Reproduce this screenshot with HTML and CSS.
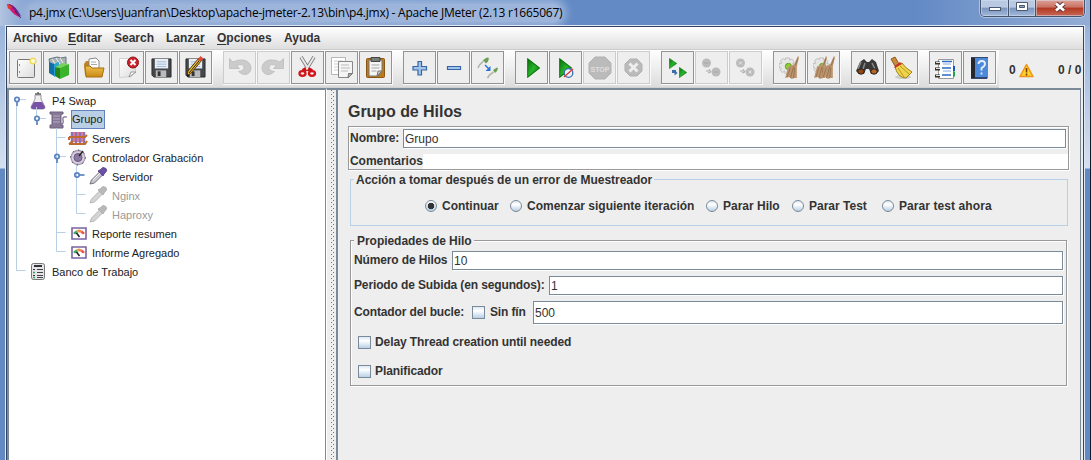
FILE: index.html
```html
<!DOCTYPE html>
<html lang="es">
<head>
<meta charset="utf-8">
<title>p4.jmx - Apache JMeter</title>
<link rel="stylesheet" href="styles.css">
</head>
<body>
<svg width="0" height="0" class="defs">
  <defs>
    <linearGradient id="green" x1="0" y1="0" x2="1" y2="1"><stop offset="0" stop-color="#0b6b0b"/><stop offset=".5" stop-color="#27b32b"/><stop offset="1" stop-color="#087008"/></linearGradient>
    <linearGradient id="gold" x1="0" y1="0" x2="0" y2="1"><stop offset="0" stop-color="#efc04e"/><stop offset="1" stop-color="#c98a15"/></linearGradient>
    <linearGradient id="paper" x1="0" y1="0" x2="1" y2="1"><stop offset="0" stop-color="#fff"/><stop offset="1" stop-color="#dcdcdc"/></linearGradient>
    <symbol id="floppy" viewBox="0 0 22 22"><path d="M1 2h20v19H3l-2-2z" fill="#45474a" stroke="#2b2c2e"/><path d="M4 2h14v10H4z" fill="#e9eef5"/><path d="M6 5h10M6 7.500h10M6 10h10" stroke="#9db6da"/><path d="M5 14h11v7H5z" fill="#b9bbbd"/><path d="M7 15h3v5H7z" fill="#333"/></symbol>
    <symbol id="play" viewBox="0 0 13 18" preserveAspectRatio="none"><path d="M.7.700v16.600L12.500 9z" fill="url(#green)" stroke="#0b780b"/></symbol>
    <symbol id="broom" viewBox="0 0 14 22" preserveAspectRatio="none"><path d="M13 0 9.500 8 4 10 1 21l4-1 2 2 3-1 2 0V10L14 1z" fill="#bd9670"/><path d="M6 11 3 20m6-10L6 21m4-10-1 10M13 2l-2.500 7" stroke="#8b6745" stroke-width=".7" fill="none"/></symbol>
    <symbol id="gear" viewBox="0 0 18 18"><path d="m7 1 4 0 .5 2.500 2-1.500 2.500 3-1.500 2 3 .5v4l-3 .5 1 2.500-3 2.500-2-1.500-.5 2.500H6.500L6 15l-2.500 1.500L1 13.500 2.500 12 0 11V7l3-.5L1.500 4l3-2.500 2 1.500z" fill="#e6e6e6" stroke="#b2b2b2" stroke-width=".8"/><circle cx="10" cy="10" r="3.300" fill="#87d42b" stroke="#5c9d25"/></symbol>
    <symbol id="pipette" viewBox="0 0 18 18"><path d="M1 17l1.500-4 9-9 3 3-9 9z" fill="#c9c6cf" stroke="#77727d"/><path d="m4 13 7-7" stroke="#f4f2f6"/><path d="m9 4 2-1 3-2.500 3 1L17.500 4 15 7l-1 2z" fill="#6a51a4" stroke="#59438c"/></symbol>
    <symbol id="pipette-off" viewBox="0 0 18 18"><path d="M1 17l1.500-4 9-9 3 3-9 9z" fill="#d4d4d4" stroke="#b7b7b7"/><path d="m9 4 2-1 3-2.500 3 1L17.500 4 15 7l-1 2z" fill="#b9b9b9" stroke="#b0b0b0"/></symbol>
    <symbol id="gauge" viewBox="0 0 16 13"><path d="M1 1h14v11H1z" fill="#fff" stroke="#7863a1" stroke-width="1.600"/><path d="m2 6 3-2.500 2 2-3 2z" fill="#3cab5c"/><path d="m5 3.500 3-1 3 1-1.500 2h-2z" fill="#ef9248"/><path d="m11 3.500 3 2.500-2 1.500L9.500 5.500z" fill="#e95353"/><path d="m5.500 6 3 4" stroke="#222" stroke-width="1.600"/></symbol>
    <symbol id="undo" viewBox="0 0 24 19"><path d="M1.500 1.500v10h10L8.500 8.500Q15 6 16 10q.5 4-5.500 4.500Q14 18 18 17.500q5-1.500 5-7Q22 4 15 3 9 2.500 5 5z" fill="#cbcbcb" stroke="#c2c2c2"/></symbol>
  </defs>
</svg>
<div class="window">
  <header class="titlebar">
    <svg class="feather" viewBox="0 0 17 17"><path d="M1 1q6 0 10 6l4 8-4-2Q4 9 1 1z" fill="#d5186f"/><path d="M3 2q6 2 11 11" stroke="#64238f" stroke-width="2" fill="none"/><path d="M1 1 7 4 2 6z" fill="#e63a28"/><path d="m9 8 6 7" stroke="#30145e"/></svg>
    <span class="title">p4.jmx (C:\Users\Juanfran\Desktop\apache-jmeter-2.13\bin\p4.jmx) - Apache JMeter (2.13 r1665067)</span>
    <div class="controls">
      <div class="ctl min"><svg width="14" height="14"><rect x="1.500" y="7.500" width="11" height="3" fill="#fff" stroke="#4c5870"/></svg></div>
      <div class="ctl max"><svg width="14" height="14"><path d="M1.500 2.500h11v8h-11z" fill="#fff" stroke="#4c5870"/><path d="M4.500 5.500h5v2h-5z" fill="#8ea5c9" stroke="#4c5870"/></svg></div>
      <div class="ctl close"><svg width="14" height="14"><path d="m3 3.500 8 7m0-7-8 7" stroke="#5b3440" stroke-width="4.500"/><path d="m3 3.500 8 7m0-7-8 7" stroke="#fff" stroke-width="2.800"/></svg></div>
    </div>
  </header>
  <main class="client">
    <nav class="menu">
      <span class="m1">Archivo</span><span class="m2"><u>E</u>ditar</span><span class="m3">Search</span><span class="m4">Lanza<u>r</u></span><span class="m5"><u>O</u>pciones</span><span class="m6">Ayuda</span>
    </nav>
    <div class="toolbar">
      <div class="tools">
        <div class="group">
          <button class="tool"><svg viewBox="0 0 33 33"><rect x="8.500" y="8.500" width="17" height="18" rx="1" fill="url(#paper)" stroke="#777"/><path d="M10.500 13v2m0 5v2" stroke="#888"/><circle cx="24" cy="10" r="2.800" fill="#fffbd8" stroke="#f0dc58" stroke-width="1.400"/></svg></button>
          <button class="tool"><svg viewBox="0 0 33 33"><path d="M6 8 14 6l4 1 5-1v12L8 21z" fill="#a9b3b5" stroke="#65777d"/><path d="m9 8 4 6m0-7 4 6m0-6 3 5" stroke="#eef5f6"/><path d="m6 11 5 2v12l-5-3z" fill="#0f6fa7"/><path d="m11 13 5-2v12l-5 3z" fill="#2ba0d2"/><path d="m12 16 5 1v11l-5-3z" fill="#25841b"/><path d="m17 17 9-4v11l-9 4z" fill="#3bb32b"/><path d="m12 16 8-4 6 1-9 4z" fill="#75d45c"/></svg></button>
          <button class="tool"><svg viewBox="0 0 33 33"><path d="M7 13l2-3h4v14H8z" fill="#be8427"/><path d="m12 8 7-1 3 3v10H12z" fill="#fff" stroke="#888"/><path d="M14 11h5m-5 2.500h6" stroke="#aaa"/><path d="M8 15h5l2 2h12l-2 9H9z" fill="url(#gold)" stroke="#a96e0c"/></svg></button>
          <button class="tool"><svg viewBox="0 0 33 33"><path d="M8.500 7.500h16v13l-4 5-12 1z" fill="url(#paper)" stroke="#d1d1d1"/><path d="m18 26 2-5h5z" fill="#fff" stroke="#777" stroke-width=".7"/><circle cx="22" cy="11.500" r="5.500" fill="#c9222a" stroke="#8e1518"/><path d="m19.500 9 5 5m0-5-5 5" stroke="#fff" stroke-width="2"/></svg></button>
          <button class="tool"><svg viewBox="0 0 33 33"><use href="#floppy" x="6" y="6" width="21" height="21"/></svg></button>
          <button class="tool"><svg viewBox="0 0 33 33"><use href="#floppy" x="6" y="6" width="21" height="21"/><path d="m8 25 1-5L20 7l3 2-11 13z" fill="#f0bd31" stroke="#553900"/><path d="m10 22 10-12" stroke="#222"/><path d="m18.500 9 3-4 3 2.500-3 3z" fill="#dd4a38"/><path d="m8 26 .5-3 2 1.500z" fill="#111"/></svg></button>
        </div>
        <div class="group">
          <button class="tool off"><svg viewBox="0 0 33 33"><use href="#undo" x="5" y="6" width="24" height="19"/></svg></button>
          <button class="tool off"><svg viewBox="0 0 33 33"><use href="#undo" x="5" y="6" width="24" height="19" transform="matrix(-1 0 0 1 33 0)"/></svg></button>
          <button class="tool"><svg viewBox="0 0 33 33"><path d="m10 6 8 13M23 6l-8 13" stroke="#777" stroke-width="3.500"/><path d="m10 6 8 13M23 6l-8 13" stroke="#e9e9e9" stroke-width="2"/><path d="m15 18-3 2m5-2 4 2" stroke="#c91015" stroke-width="4"/><ellipse cx="11.500" cy="22.500" rx="3" ry="2.300" fill="#eee" stroke="#d41418" stroke-width="2.300"/><ellipse cx="21" cy="22.500" rx="3" ry="2.300" fill="#eee" stroke="#d41418" stroke-width="2.300"/></svg></button>
          <button class="tool"><svg viewBox="0 0 33 33"><path d="M6.500 6.500h14v17h-14z" fill="#fff" stroke="#b6b6b6"/><path d="M9 10h9M9 13h5m-5 3h4m-4 3h4" stroke="#ccc"/><path d="M13.500 10.500h14v12l-4 4h-10z" fill="#f5f5f5" stroke="#888"/><path d="M16 14h8m-8 3h9m-9 3h7" stroke="#bbb"/><path d="m23 27 .5-4.500h4z" fill="#aaa" stroke="#777"/></svg></button>
          <button class="tool"><svg viewBox="0 0 33 33"><rect x="7.500" y="7.500" width="18" height="19" rx="1" fill="#bb791c" stroke="#8b5710"/><path d="M10 9h13v11l-4 5h-9z" fill="#f5f5f5" stroke="#777"/><path d="M12 6.500h9v4h-9z" fill="#777f77" stroke="#444"/><path d="M12.500 14h8m-8 3h8m-8 3h5" stroke="#a5a5a5"/><path d="m18 25 1-5h4z" fill="#ccc" stroke="#777"/></svg></button>
        </div>
        <div class="group">
          <button class="tool"><svg viewBox="0 0 33 33"><path d="M15 10.500h3.500v5H23.500V19h-5v5H15v-5h-5v-3.500h5z" fill="#a3c4ea" stroke="#3665a5" stroke-width="1.200"/></svg></button>
          <button class="tool"><svg viewBox="0 0 33 33"><path d="M10.500 15.500h13v3h-13z" fill="#a3c4ea" stroke="#3665a5" stroke-width="1.200"/></svg></button>
          <button class="tool"><svg viewBox="0 0 33 33"><path d="m7 17 1.500-3 4-4M16.500 27l2-3 4-3" stroke="#b0b6ac" stroke-width="1.600" fill="none"/><path d="m12 9 4-2.500 2 .5-1 3.500-2 2zm10 10 4-2.500 1 .5-1 3-2 2z" fill="#689f53"/><path d="m14 14 4 4" stroke="#2874d9" stroke-width="1.500"/><path d="M19.500 15v5h-5z" fill="#2874d9"/></svg></button>
        </div>
        <div class="group">
          <button class="tool"><svg viewBox="0 0 33 33"><use href="#play" x="12" y="7" width="13" height="20"/></svg></button>
          <button class="tool"><svg viewBox="0 0 33 33"><use href="#play" x="10" y="7" width="13" height="20"/><circle cx="19.500" cy="22" r="4.300" fill="#edf3fa" stroke="#376eaf" stroke-width="1.300"/><path d="m15 26 9-8" stroke="#dc3b36" stroke-width="1.500"/></svg></button>
          <button class="tool off"><svg viewBox="0 0 33 33"><path d="m12 6 10 0 6 6v10l-6 6h-10l-6-6v-10z" fill="#bbb" stroke="#b1b1b1"/><text x="17" y="20.500" class="stop" textLength="19" lengthAdjust="spacingAndGlyphs">STOP</text></svg></button>
          <button class="tool off"><svg viewBox="0 0 33 33"><path d="m13 8 7 0 5 5v7l-5 5h-7l-5-5v-7z" fill="#bbb" stroke="#b1b1b1"/><path d="m12.500 12.500 8 8m0-8-8 8" stroke="#eee" stroke-width="3"/></svg></button>
        </div>
        <div class="group">
          <button class="tool"><svg viewBox="0 0 33 33"><use href="#play" x="8" y="7" width="8" height="11"/><use href="#play" x="18" y="16" width="8" height="11"/><path d="M11 20.500h4" stroke="#3e6cab" stroke-width="3"/><path d="m13.500 19 3 3-3 2.500z" fill="#3e6cab"/></svg></button>
          <button class="tool off"><svg viewBox="0 0 33 33"><g fill="#bbb"><circle cx="11.500" cy="12" r="4.500"/><circle cx="21" cy="21" r="4.500"/></g><path d="M9 12h5m4.500 9h5" stroke="#aaa"/><path d="M11 20h4m-1-2 2 3-3 1" stroke="#aaa" fill="none"/></svg></button>
          <button class="tool off"><svg viewBox="0 0 33 33"><g fill="#bbb"><circle cx="11.500" cy="12" r="4.500"/><circle cx="21" cy="21" r="4.500"/></g><path d="m10 10.500 3 3m0-3-3 3m9.500 6 3 3m0-3-3 3" stroke="#e5e5e5"/><path d="M11 20h4m-1-2 2 3-3 1" stroke="#aaa" fill="none"/></svg></button>
        </div>
        <div class="group">
          <button class="tool"><svg viewBox="0 0 33 33"><use href="#gear" x="6" y="6" width="17" height="17"/><use href="#broom" x="11" y="5" width="15" height="23"/></svg></button>
          <button class="tool"><svg viewBox="0 0 33 33"><use href="#gear" x="6" y="6" width="17" height="17"/><use href="#broom" x="6" y="5" width="14" height="23"/><use href="#broom" x="13" y="5" width="15" height="23"/></svg></button>
        </div>
        <div class="group">
          <button class="tool"><svg viewBox="0 0 33 33"><path d="m9 11 4-3 3 3h2l3-3 4 3 3 9-3 3h-5l-2-5h-3l-2 5H8l-3-3z" fill="#393939"/><path d="m10 11-3 7m7-6-2 6m9-6 3 6" stroke="#8a8a8a" stroke-width="1.500"/><ellipse cx="10" cy="20.500" rx="3.200" ry="2.700" fill="#944710" stroke="#222"/><ellipse cx="23" cy="20.500" rx="3.200" ry="2.700" fill="#b76522" stroke="#222"/></svg></button>
          <button class="tool"><svg viewBox="0 0 33 33"><ellipse cx="18" cy="26" rx="8" ry="2" fill="#ccc"/><path d="m6 8 4-2 4 7-4 2z" fill="#c98b3c" stroke="#8c5b1d"/><path d="m10 16 7-4q3 5 10 9l-6 6q-8 0-11-11z" fill="#efd34c" stroke="#a28412"/><path d="m13 17 6 9m-4-11 9 8" stroke="#b49b25"/><path d="m9 16 6-5 2 2-7 4z" fill="#cf302b"/></svg></button>
        </div>
        <div class="group">
          <button class="tool"><svg viewBox="0 0 33 33"><path d="M9.500 8.500h15v19h-15z" fill="#fff" stroke="#999"/><path d="M25 15v5" stroke="#1557bd" stroke-width="2"/><path d="M25 20.500v5" stroke="#25a244" stroke-width="2"/><path d="M13 10.500h10M13 17h9m-9 7h9" stroke="#2b6bc5" stroke-width="1.400"/><path d="M14 13h8m-8 7h8" stroke="#7fa9dd"/><path d="M6 12h5m-5 6h5m-5 7h5" stroke="#333" stroke-width="3"/><path d="M7 11.500h4m-4 6h4m-4 7h4" stroke="#ddd"/></svg></button>
          <button class="tool"><svg viewBox="0 0 33 33"><path d="M8 6h17v20l-1 2H8z" fill="#32486e"/><path d="M12 7h13v19H12z" fill="#4d88d9"/><path d="M8 7h4v20H8z" fill="#24272d"/><path d="M15.500 13q0-3 3.500-3 3 0 3 3 0 2-3.500 4v2.500M18.500 21.500v2" stroke="#e4effd" stroke-width="1.800" fill="none"/></svg></button>
        </div>
      </div>
      <div class="counters"><span class="errs">0</span><svg width="15" height="15" viewBox="0 0 15 15"><path d="M7.500 1.500 14 13.500H1z" fill="#ffd42a" stroke="#ef9416" stroke-width="1.500" stroke-linejoin="round"/><path d="M7.500 5v4.500m0 1v2" stroke="#7d3a0b" stroke-width="1.600"/></svg><span class="threads">0 / 0</span></div>
    </div>
    <div class="split">
      <section class="tree">
        <svg class="links" width="120" height="200" fill="none">
          <g stroke="#b8cfe5"><path d="M7.500 16v164.500h9M11 9.500h6M27.500 17v10M31 28.500h6M47.500 38v123.500h9M47.500 47.500h9M51 66.500h6M47.500 142.500h9M67.500 75v48.500h9M67.500 104.500h9"/></g>
          <g stroke="#5b83c0" stroke-width="1.700"><circle cx="8" cy="9.500" r="2.200"/><path d="M8 12v4"/><circle cx="28" cy="28.500" r="2.200"/><path d="M28 31v4"/><circle cx="48" cy="66.500" r="2.200"/><path d="M48 69v4"/><circle cx="68" cy="85" r="2.200"/><path d="M70.500 85h5"/></g>
        </svg>
        <div class="row l0"><svg viewBox="0 0 20 19"><path d="M7 4h6v4l4 8q0 2-2 2H5q-2 0-2-2l4-8z" fill="#eee" stroke="#9a96a1"/><path d="m6 11h8l3 5q0 2-2 2H5q-2 0-2-2z" fill="#7952a8"/><path d="M7 3h6M10 1v2" stroke="#666" stroke-width="1.500"/></svg><span>P4 Swap</span></div>
        <div class="row l1"><svg viewBox="0 0 20 19"><path d="M2 2h13v2h-2v11h2v3H2v-3h2V4H2z" fill="#877996" stroke="#716080"/><path d="M5 6h7M5 9h7m-7 3h7" stroke="#b5a8c2"/><path d="M13 14q3 0 2-4-1-4 4-3" fill="none" stroke="#756586" stroke-width="1.200"/></svg><span class="selected">Grupo</span></div>
        <div class="row l2"><svg viewBox="0 0 20 19"><path d="M4 3v11m4-11v11m4-11v11m4-11v11" stroke="#8d73b6" stroke-width="2.500"/><path d="M6 3v10m4-10v10m4-10v10" stroke="#d7476a" stroke-width="1.300"/><path d="M1 8h16l2-2M1 15h16l2-3M1 8v3m0 4 4-3" stroke="#bd6c2d" stroke-width="2" fill="none"/></svg><span>Servers</span></div>
        <div class="row l2"><svg viewBox="0 0 20 19"><circle cx="10" cy="9.500" r="7" fill="#d5cedc" stroke="#a99db8" stroke-width="1.300"/><circle cx="10" cy="9.500" r="7.500" fill="none" stroke="#222" stroke-dasharray="1 4.900"/><circle cx="10" cy="9.500" r="4" fill="#8b79a2" stroke="#6a5683"/><path d="m11 8 4-5" stroke="#222" stroke-width="1.500"/></svg><span>Controlador Grabación</span></div>
        <div class="row l3"><svg viewBox="0 0 20 19"><use href="#pipette" x="1" y="0" width="18" height="18"/></svg><span>Servidor</span></div>
        <div class="row l3 dim"><svg viewBox="0 0 20 19"><use href="#pipette-off" x="1" y="0" width="18" height="18"/></svg><span>Nginx</span></div>
        <div class="row l3 dim"><svg viewBox="0 0 20 19"><use href="#pipette-off" x="1" y="0" width="18" height="18"/></svg><span>Haproxy</span></div>
        <div class="row l2"><svg viewBox="0 0 20 19"><use href="#gauge" x="3" y="3" width="16" height="13"/></svg><span>Reporte resumen</span></div>
        <div class="row l2"><svg viewBox="0 0 20 19"><use href="#gauge" x="3" y="3" width="16" height="13"/></svg><span>Informe Agregado</span></div>
        <div class="row l0"><svg viewBox="0 0 20 19"><rect x="3.500" y="1.500" width="13" height="16" rx="2" fill="#e6e4ea" stroke="#777"/><path d="M6 4h8" stroke="#333" stroke-width="2"/><path d="M9 7.500h6m-6 3h6m-6 3h6m-6 2h6" stroke="#444"/><path d="M5 7.500h2m-2 6h2" stroke="#333"/><path d="M5 10.500h2m-2 5h2" stroke="#30a652" stroke-width="1.500"/></svg><span>Banco de Trabajo</span></div>
      </section>
      <div class="divider"></div>
      <section class="panel">
        <h1>Grupo de Hilos</h1>
        <div class="naming">
          <div class="name-row"><label>Nombre:</label><div class="field">Grupo</div></div>
          <div class="comment-row"><label>Comentarios</label><div class="comment"></div></div>
        </div>
        <div class="box action">
          <div class="legend">Acción a tomar después de un error de Muestreador</div>
          <div class="radios">
            <span class="r1"><i class="radio on"></i>Continuar</span><span class="r2"><i class="radio"></i>Comenzar siguiente iteración</span><span class="r3"><i class="radio"></i>Parar Hilo</span><span class="r4"><i class="radio"></i>Parar Test</span><span class="r5"><i class="radio"></i>Parar test ahora</span>
          </div>
        </div>
        <div class="box props">
          <div class="legend">Propiedades de Hilo</div>
          <div class="prop p1"><label>Número de Hilos</label><div class="field">10</div></div>
          <div class="prop p2"><label>Periodo de Subida (en segundos):</label><div class="field">1</div></div>
          <div class="prop p3"><label>Contador del bucle:</label><i class="check"></i><span>Sin fín</span><div class="field">500</div></div>
          <div class="option"><i class="check"></i>Delay Thread creation until needed</div>
          <div class="option last"><i class="check"></i>Planificador</div>
        </div>
      </section>
    </div>
  </main>
</div>
</body>
</html>
```
FILE: styles.css
```css
* { box-sizing: border-box; }
body { margin: 0; overflow: hidden; font: bold 12px/14px "Liberation Sans", Arial, sans-serif; color: #333; }
.defs { position: absolute; }
svg { display: block; flex: none; }
span, label { white-space: nowrap; }

.window {
  display: flex; flex-direction: column; width: 1091px; height: 460px;
  padding-right: 1px;
  background: linear-gradient(#99b4dc 26px, #d4e0f0 168px, #6389c2 169px) left / 1090px 100% no-repeat, #111a2b;
}
.titlebar {
  display: flex; align-items: flex-start; height: 26px; flex: none; overflow: hidden;
  background: linear-gradient(90deg, #b2c4e0, #7f9ed0 30px, #638ac5 50%, #638ac5 84%, #95add5);
}
.feather { width: 17px; height: 17px; margin: 3px 0 0 6px; }
.title {
  margin: 4px 0 0 5px; width: 533px; height: 18px; padding-left: 1px;
  font: 12px/17px "Open Sans", "Noto Sans", sans-serif; letter-spacing: -.24px; color: #000;
  background: #9db5db; box-shadow: 0 0 8px 5px #9db5db;
  border-radius: 8px;
}
.controls {
  display: flex; margin-left: auto; margin-right: 5px; width: 105px; height: 17px;
  border: 1px solid #46556f; border-top: 0; border-radius: 0 0 5px 5px; overflow: hidden;
  box-shadow: 0 0 0 1px #c9d6eaaa;
}
.ctl { display: flex; justify-content: center; width: 28px; height: 16px; border-right: 1px solid #46556f; background: linear-gradient(#b9c9e2 45%, #7b94bd 50%, #a2b9db); box-shadow: inset 0 0 0 1px #d6e0f088; }
.ctl.max { width: 27px; }
.ctl.close { width: 48px; border-right: 0; background: linear-gradient(#dda196 0, #ca7162 45%, #b23720 50%, #c76855); }

.client {
  flex: 1; display: flex; flex-direction: column; min-height: 0;
  margin: 0 6px 0 6px; border: 1px solid #35435e; border-bottom: 0; background: #eee;
  box-shadow: 0 0 0 1px #dfe8f4;
}
.menu { display: flex; height: 23px; flex: none; padding: 4px 0 0 6px; border-bottom: 1px solid #ccc; background: linear-gradient(#fff, #dedede); }
.menu u { text-underline-offset: 2px; }
.m1 { width: 55px; }
.m2 { width: 46px; }
.m3 { width: 52px; }
.m4 { width: 51px; }
.m5 { width: 67px; }

.toolbar { display: flex; height: 38px; flex: none; }
.tools { display: flex; gap: 10px; width: 992px; padding: 1px 0 0 2px; background: linear-gradient(#fff, #dcdcdc); border-bottom: 1px solid #d0d0d0; }
.group { display: flex; gap: 1px; padding-right: 1px; height: 34px; background: #fafafa; }
.tool { display: block; width: 33px; height: 33px; padding: 0; border: 1px solid #939393; background: #eee; }
.tool svg { width: 33px; height: 33px; margin: -1px; }
.tool.off { border-color: #ccc; }
.stop { font: bold 8px "Liberation Sans", Arial, sans-serif; text-anchor: middle; fill: #dedede; }
.counters { display: flex; align-items: center; padding-left: 10px; flex: 1; padding-top: 2px; }
.errs { width: 10px; }
.threads { margin-left: 24px; }

.split { display: flex; flex: 1; min-height: 0; }
.tree { position: relative; width: 319px; background: #fff; border: 2px solid #7a8a99; border-right-width: 1px; border-bottom: 0; padding-top: 1px; color: #222; font-size: 11px; font-weight: normal; }
.links { position: absolute; left: 0; top: 0; }
.row { display: flex; align-items: center; height: 19px; }
.row svg { width: 20px; height: 19px; }
.row span { margin-left: 3px; padding: 0 1px; line-height: 18px; }
.l0 { padding-left: 19px; }
.l1 { padding-left: 39px; }
.l2 { padding-left: 59px; }
.l3 { padding-left: 79px; }
.l1 span.selected { background: #b8cfe5; border: 1px solid #6382bf; height: 19px; line-height: 17px; padding: 0; width: 34px; }
.dim { color: #999; }
.divider { width: 10px; border-top: 2px solid #7a8a99; border-left: 1px solid #fff; }
.divider::after {
  content: ""; display: block; width: 4px; height: 100%; margin-left: 4px;
  background: repeating-linear-gradient(#777 0 1px, #eee 1px 4px) 0 0 / 1px 100% no-repeat, repeating-linear-gradient(#eee 0 2px, #777 2px 3px, #eee 3px 4px) 2px 0 / 1px 100% no-repeat;
}

.panel { width: 745px; border: 2px solid #7a8a99; border-right-width: 1px; border-bottom: 0; padding: 12px 12px 0 10px; }
h1 { margin: 0; height: 24px; font-size: 16px; line-height: 20px; letter-spacing: -.05px; }
.naming { width: 721px; height: 44px; border: 1px solid #999; box-shadow: 1px 1px #fff, inset 1px 1px #fff; padding: 1px 0 0 1px; }
.name-row { display: flex; align-items: center; height: 20px; }
.name-row label { width: 53px; }
.field { flex: 1; height: 19px; padding-left: 1px; border: 1px solid #7a8a99; background: #fff; box-shadow: 1px 1px #fff; font-weight: normal; line-height: 18px; }
.name-row .field { margin-right: 2px; }
.comment-row { display: flex; height: 15px; margin-top: 5px; padding-top: 1px; align-items: center; }
.comment-row label { width: 73px; letter-spacing: -.05px; }
.comment { flex: 1; height: 15px; background: #fff; }

.box { position: relative; width: 718px; margin-left: 2px; border: 1px solid #999; }
.legend { position: absolute; top: -7px; left: 3px; padding: 0 2px; background: #eee; white-space: nowrap; letter-spacing: -.04px; }
.props .legend { padding-left: 3px; }
.action { height: 47px; margin-top: 9px; border-color: #b8cfe5; }
.radios { display: flex; padding: 20px 0 0 74px; }
.radios span { display: flex; align-items: flex-start; gap: 5px; height: 13px; line-height: 12px; }
.r1 { width: 85px; }
.r2 { width: 196px; }
.r3 { width: 86px; }
.r4 { width: 90px; }
.radios .r5 { letter-spacing: .08px; }
.radio { width: 12px; height: 12px; flex: none; border: 1px solid #7a8a99; border-radius: 50%; background: linear-gradient(#dce8f3, #fff 35%, #b8cfe5); }
.radio.on { background: radial-gradient(circle, #333 3px, transparent 3.6px), linear-gradient(#fff, #b8cfe5); }
.props { width: 717px; height: 146px; margin-top: 14px; padding: 10px 3px 0 3px; box-shadow: 1px 1px #fff, inset 1px 1px #fff; }
.prop { display: flex; align-items: center; }
.prop label, .prop span { padding-bottom: 1px; letter-spacing: -.13px; }
.p1 label { width: 98px; }
.p2 { margin-top: 6px; }
.p2 label { width: 195px; }
.p3 { margin-top: 6px; }
.p3 label { width: 118px; }
.p3 span { width: 43px; margin-left: 5px; }
.p3 .field { height: 23px; line-height: 22px; }
.check { display: block; flex: none; width: 13px; height: 13px; border: 1px solid #7a8a99; background: linear-gradient(#dce8f3, #fff 35%, #b8cfe5); }
.option { display: flex; align-items: flex-start; gap: 4px; height: 13px; line-height: 12px; margin: 12px 0 0 4px; letter-spacing: -.09px; }
.option.last { margin-top: 16px; }
```
